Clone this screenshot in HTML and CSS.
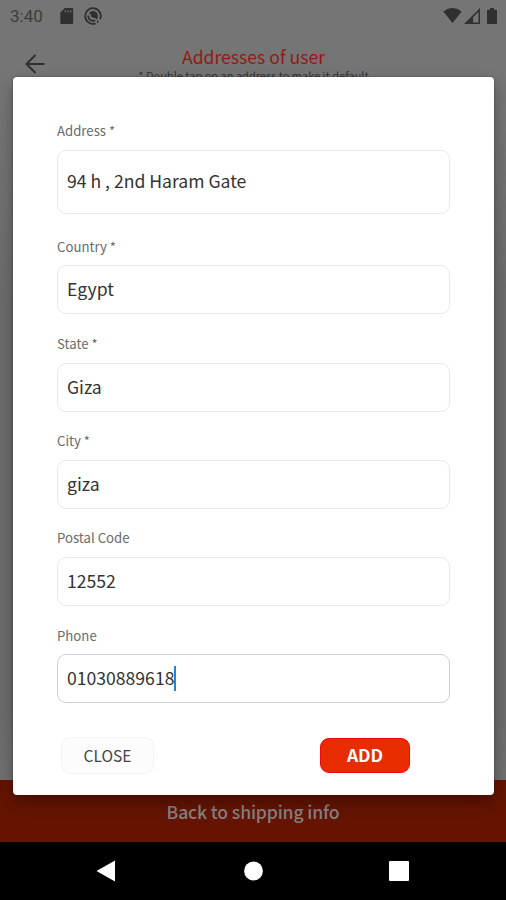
FILE: index.html
```html
<!DOCTYPE html>
<html lang="en">
<head>
<meta charset="utf-8">
<title>Addresses of user</title>
<link rel="stylesheet" href="styles.css">
</head>
<body>
<div class="screen">
  <div class="status">
    <span class="time">3:40</span>
    <svg class="sd" width="14" height="16" viewBox="0 0 14 16"><path fill="#303030" d="M4.800 0H12q1.200 0 1.200 1.200v13.600Q13.200 16 12 16H1.500Q.300 16 .300 14.800V4.500z"/><path stroke="#6a6a6a" stroke-width="1.300" d="M5.300 2.300v2.200M8 2.300v2.200M10.700 2.300v2.200"/></svg>
    <svg class="sync" width="18" height="18" viewBox="0 0 18 18" fill="none" stroke="#303030"><path stroke-width="1.800" d="M11.500 16.400A7.800 7.800 0 1 1 16 12.400"/><path stroke-width="1.700" d="M11.300 13.200A4.800 4.800 0 0 1 4.300 8.500"/><path fill="#303030" stroke="none" d="M5 6Q6.800 4 9.200 4.100A4.900 4.900 0 0 1 13.900 9Q14 11 12.800 12.500L11 10.800Q9 11.300 7.700 10T7 7.500zM12.500 13l2.500 1.500-1.500 2z"/></svg>
    <span class="fill"></span>
    <svg width="19" height="15" viewBox="0 0 19 15"><path fill="#303030" d="M.300 3.500Q9.500-3.400 18.700 3.500L9.500 15z"/></svg>
    <svg class="signal" width="16" height="16" viewBox="0 0 16 16"><path fill="#303030" fill-rule="evenodd" d="M0 16 16 0V16zM9 14.500h5.500V3.700L9 9.200z"/></svg>
    <svg class="battery" width="10" height="16" viewBox="0 0 10 16"><path fill="#303030" d="M3 0h4v1.700h2q1 0 1 1V15q0 1-1 1H1q-1 0-1-1V2.700q0-1 1-1h2z"/></svg>
  </div>
  <header class="header">
    <svg class="back" width="20" height="20" viewBox="0 0 20 20" fill="none" stroke="#303030" stroke-width="2"><path d="M19.500 10H2M10.500 1 1.500 10l9 9"/></svg>
    <div class="titles">
      <h1 class="title">Addresses of user</h1>
      <p class="hint">* Double tap on an address to make it default</p>
    </div>
  </header>
  <main class="content"></main>
  <div class="bottom">Back to shipping info</div>
  <nav class="nav">
    <svg width="20" height="22" viewBox="0 0 20 22"><path fill="#fff" d="M19 .500v21L.500 11z"/></svg>
    <svg width="20" height="20" viewBox="0 0 20 20"><circle cx="10.500" cy="10" r="9.400" fill="#fff"/></svg>
    <svg width="20" height="20" viewBox="0 0 20 20"><rect width="20" height="20" rx="1" fill="#fff"/></svg>
  </nav>
  <form class="dialog">
    <div class="field tall"><label class="label">Address *</label><div class="input">94 h , 2nd Haram Gate</div></div>
    <div class="field"><label class="label">Country *</label><div class="input">Egypt</div></div>
    <div class="field"><label class="label">State *</label><div class="input">Giza</div></div>
    <div class="field"><label class="label">City *</label><div class="input">giza</div></div>
    <div class="field"><label class="label">Postal Code</label><div class="input">12552</div></div>
    <div class="field focus"><label class="label">Phone</label><div class="input">01030889618<i class="caret"></i></div></div>
    <div class="actions">
      <button type="button" class="button close">CLOSE</button>
      <button type="button" class="button add">ADD</button>
    </div>
  </form>
</div>
</body>
</html>
```
FILE: styles.css
```css
* { box-sizing: border-box; }
body { margin: 0; font-family: "Noto Sans CJK SC", sans-serif; }
.screen {
  position: relative;
  display: flex;
  flex-direction: column;
  width: 506px;
  height: 900px;
  overflow: hidden;
  background: #757575;
}
svg { display: block; flex: none; }
.status {
  display: flex;
  align-items: center;
  height: 31px;
  padding: 0 8px 0 10px;
}
.time { font: 17px/31px Roboto, sans-serif; color: #3d3d3d; width: 50px; padding-top: 1px; }
.sync { margin-left: 10px; }
.fill { flex: 1; }
.signal { margin-left: 2px; }
.battery { margin-left: 7px; margin-right: 1px; }
.header { display: flex; height: 61px; padding-left: 25px; }
.back { margin-top: 23px; }
.titles { flex: 1; padding: 14px 44px 0 0; text-align: center; }
.title { margin: 0; font-size: 17.600px; line-height: 24px; font-weight: 400; color: #921a14; }
.hint { margin: 0; font-size: 11px; line-height: 13px; color: #333; white-space: nowrap; }
.content { flex: 1; background: linear-gradient(#757575, #6c6c6c 30%, #6c6c6c 90%, #707070); }
.bottom {
  height: 62px;
  background: #641400;
  color: #858080;
  font-size: 17.600px;
  font-weight: 500;
  letter-spacing: -.150px;
  line-height: 63px;
  text-align: center;
}
.nav {
  display: flex;
  align-items: center;
  justify-content: space-between;
  height: 58px;
  padding: 0 97px 0 96px;
  background: #000;
}
.dialog {
  position: absolute;
  left: 13px;
  top: 77px;
  width: 481px;
  height: 718px;
  padding: 44px 44px 0;
  background: #fff;
  border-radius: 4px;
  box-shadow: 0 7px 16px rgba(0, 0, 0, .3), 0 0 2px rgba(0, 0, 0, .4);
}
.field { height: 97.300px; }
.field.tall { height: 115.500px; }
.label { display: block; height: 28.800px; font-size: 13.200px; line-height: 20.500px; color: #6a6a6a; }
.input {
  display: flex;
  align-items: center;
  height: 49px;
  padding: 0 9px 1px;
  border: 1.500px solid #e9e9e9;
  border-radius: 9px;
  font-size: 17.600px;
  line-height: 24px;
  color: #333;
}
.tall .input { height: 64px; padding-bottom: 2px; }
.focus .input { border-color: #d0d0d0; }
.caret { width: 2px; height: 25px; background: #1688e8; }
.actions {
  display: flex;
  justify-content: space-between;
  align-items: center;
  margin-top: 14px;
  padding: 0 40px 0 4px;
}
.button { padding: 0 0 1px; font-family: inherit; border-radius: 9px; }
.close {
  width: 93px;
  height: 37px;
  border: 1.500px solid #f3f3f3;
  background: #fcfcfc;
  color: #444;
  font-size: 15.600px;
}
.add {
  width: 90px;
  height: 35px;
  border: 1px solid #e80c0c;
  background: #e92b00;
  color: #fff;
  font-size: 17.500px;
  font-weight: 700;
}
```
